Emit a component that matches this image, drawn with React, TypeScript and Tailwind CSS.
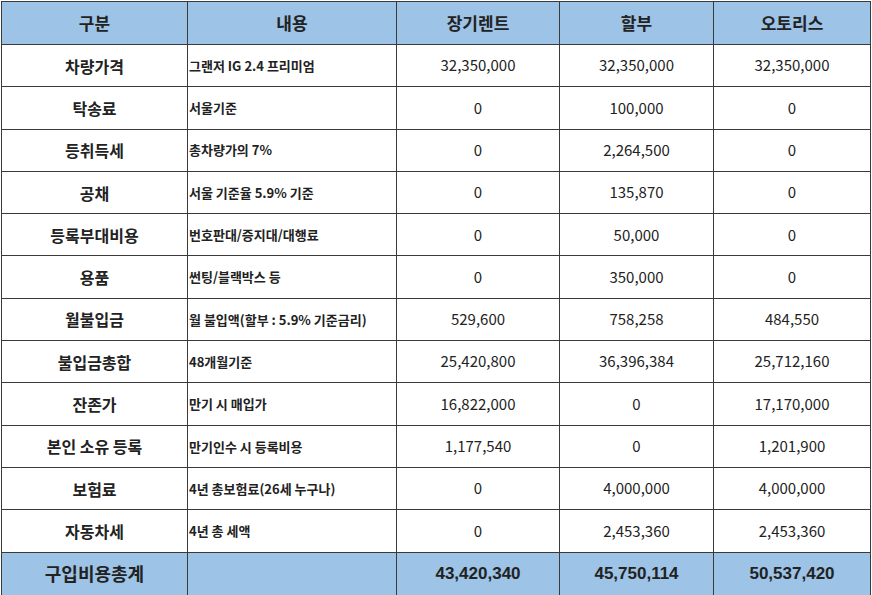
import React from 'react';

type Row = { label: string; desc: string; rent: string; loan: string; lease: string };

const rows: Row[] = [
  { label: '차량가격', desc: '그랜저 IG 2.4 프리미엄', rent: '32,350,000', loan: '32,350,000', lease: '32,350,000' },
  { label: '탁송료', desc: '서울기준', rent: '0', loan: '100,000', lease: '0' },
  { label: '등취득세', desc: '총차량가의 7%', rent: '0', loan: '2,264,500', lease: '0' },
  { label: '공채', desc: '서울 기준율 5.9% 기준', rent: '0', loan: '135,870', lease: '0' },
  { label: '등록부대비용', desc: '번호판대/증지대/대행료', rent: '0', loan: '50,000', lease: '0' },
  { label: '용품', desc: '썬팅/블랙박스 등', rent: '0', loan: '350,000', lease: '0' },
  { label: '월불입금', desc: '월 불입액(할부 : 5.9% 기준금리)', rent: '529,600', loan: '758,258', lease: '484,550' },
  { label: '불입금총합', desc: '48개월기준', rent: '25,420,800', loan: '36,396,384', lease: '25,712,160' },
  { label: '잔존가', desc: '만기 시 매입가', rent: '16,822,000', loan: '0', lease: '17,170,000' },
  { label: '본인 소유 등록', desc: '만기인수 시 등록비용', rent: '1,177,540', loan: '0', lease: '1,201,900' },
  { label: '보험료', desc: '4년 총보험료(26세 누구나)', rent: '0', loan: '4,000,000', lease: '4,000,000' },
  { label: '자동차세', desc: '4년 총 세액', rent: '0', loan: '2,453,360', lease: '2,453,360' },
];

const totals = ['43,420,340', '45,750,114', '50,537,420'];

const cell = 'border border-[#3a3a3a]';

export default function App() {
  return (
    <div className="w-[872px] h-[595px] overflow-hidden bg-white pt-px pl-px" style={{ fontFamily: '"Noto Sans CJK KR", "Noto Sans", sans-serif' }}>
      <table className="table-fixed border-collapse w-[869px] text-[#222]">
        <colgroup>
          <col className="w-[186px]" />
          <col className="w-[209px]" />
          <col className="w-[163px]" />
          <col className="w-[154px]" />
          <col className="w-[157px]" />
        </colgroup>
        <thead>
          <tr className="h-[43px] bg-[#9dc3e6] text-[17px] font-bold">
            <th className={cell}>구분</th>
            <th className={cell}>내용</th>
            <th className={cell}>장기렌트</th>
            <th className={cell}>할부</th>
            <th className={cell}>오토리스</th>
          </tr>
        </thead>
        <tbody>
          {rows.map((r) => (
            <tr key={r.label} className="h-[42.3px]">
              <td className={`${cell} text-center text-[16px] font-bold`}>{r.label}</td>
              <td className={`${cell} text-left text-[13px] font-semibold pl-px`}>{r.desc}</td>
              <td className={`${cell} text-center text-[15px]`}>{r.rent}</td>
              <td className={`${cell} text-center text-[15px]`}>{r.loan}</td>
              <td className={`${cell} text-center text-[15px]`}>{r.lease}</td>
            </tr>
          ))}
          <tr className="h-[43px] bg-[#9dc3e6] font-bold">
            <td className={`${cell} text-center text-[18px]`}>구입비용총계</td>
            <td className={cell}></td>
            {totals.map((t) => (
              <td key={t} className={`${cell} text-center text-[17px] font-['Liberation_Sans',Arial,sans-serif]`}>{t}</td>
            ))}
          </tr>
        </tbody>
      </table>
    </div>
  );
}
